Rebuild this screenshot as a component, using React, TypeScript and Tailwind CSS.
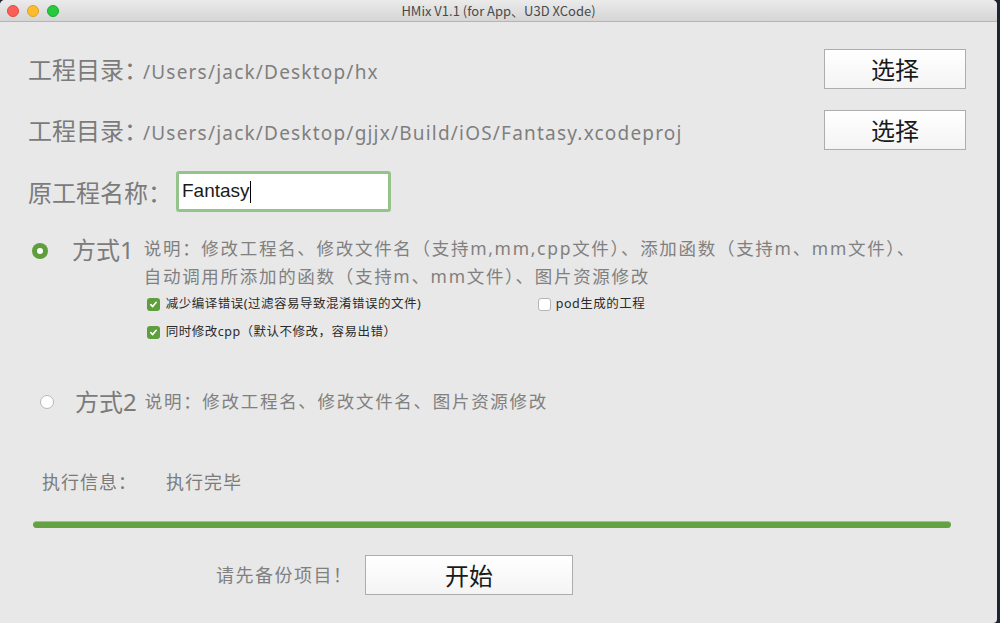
const cjk = { fontFamily: '"Noto Sans CJK SC", "Noto Sans", sans-serif' };
const mixed = { fontFamily: '"Noto Sans", "Noto Sans CJK SC", sans-serif' };

function TrafficLights() {
  return (
    <div className="absolute left-[7px] top-[5px] flex gap-[8px]">
      <span className="block w-[12px] h-[12px] rounded-full bg-[#fc5f57] border border-[#de4a41]" />
      <span className="block w-[12px] h-[12px] rounded-full bg-[#fdbc2e] border border-[#dea123]" />
      <span className="block w-[12px] h-[12px] rounded-full bg-[#28c840] border border-[#1aab29]" />
    </div>
  );
}

function MacButton({ label, className }: { label: string; className: string }) {
  return (
    <button
      className={`flex items-center justify-center bg-gradient-to-b from-white to-[#f4f4f4] border border-[#adadad] text-[24px] text-[#1a1a1a] leading-none ${className}`}
    >
      {label}
    </button>
  );
}

function Check({ checked }: { checked: boolean }) {
  if (!checked) {
    return <span className="block w-[13px] h-[13px] rounded-[3px] bg-white border border-[#b5b5b5]" />;
  }
  return (
    <span className="flex items-center justify-center w-[13px] h-[13px] rounded-[3px] bg-[#5e9e3c]">
      <svg width="9" height="9" viewBox="0 0 10 10">
        <path d="M2 5.2 L4.1 7.3 L8 2.6" stroke="white" strokeWidth="1.8" fill="none" strokeLinecap="round" strokeLinejoin="round" />
      </svg>
    </span>
  );
}

function PathRow({ path }: { path: string }) {
  return (
    <div className="flex items-center justify-between pl-[28px] pr-[31px] h-[40px]">
      <div className="flex items-baseline whitespace-nowrap text-[#7b7b7b]">
        <span className="text-[24px]">工程目录：</span>
        <span className="-ml-[5px] text-[19px] tracking-[1.2px] text-[#7f7f7f]" style={mixed}>{path}</span>
      </div>
      <MacButton label="选择" className="w-[142px] h-[40px]" />
    </div>
  );
}

export default function App() {
  return (
    <div className="w-[1000px] h-[623px] bg-[#1f2433] overflow-hidden" style={cjk}>
      <div className="w-[997px] h-[623px] bg-[#e8e8e8] rounded-t-[5px] rounded-br-[4px] overflow-hidden flex flex-col">
        {/* 标题栏 */}
        <div className="relative h-[22px] shrink-0 bg-gradient-to-b from-[#ebebeb] to-[#d5d5d5] border-b border-[#b4b4b4] flex items-center justify-center">
          <TrafficLights />
          <span className="text-[13px] text-[#4a4a4a] leading-none">HMix V1.1 (for App、U3D XCode)</span>
        </div>

        <div className="flex flex-col">
          <div className="mt-[27px] flex flex-col gap-[21px]">
            <PathRow path="/Users/jack/Desktop/hx" />
            <PathRow path="/Users/jack/Desktop/gjjx/Build/iOS/Fantasy.xcodeproj" />
          </div>

          {/* 原工程名称 */}
          <div className="flex items-center pl-[28px] mt-[21px] h-[41px]">
            <span className="text-[24px] text-[#7b7b7b] w-[148px] whitespace-nowrap">原工程名称：</span>
            <div className="w-[215px] h-[41px] border-[3px] border-[#94c48a] rounded-[3px] bg-white flex items-center pl-[3px]">
              <span className="text-[19px] text-[#1a1a1a]" style={{ fontFamily: '"Liberation Sans", Arial, sans-serif' }}>Fantasy</span>
              <span className="block w-px h-[22px] bg-black" />
            </div>
          </div>

          {/* 方式1 */}
          <div className="flex items-start pl-[32px] mt-[22px]">
            <span className="mt-[9px] flex items-center justify-center w-[16px] h-[16px] rounded-full bg-[#5e9e3c]">
              <span className="block w-[6px] h-[6px] rounded-full bg-white" />
            </span>
            <span className="ml-[24px] text-[24px] text-[#7b7b7b] leading-[32px]" style={mixed}>方式1</span>
            <div className="ml-[10px] flex flex-col">
              <p className="text-[17.5px] tracking-[1.7px] text-[#808080] leading-[28px] w-[830px]" style={mixed}>
                说明：修改工程名、修改文件名（支持m,mm,cpp文件）、添加函数（支持m、mm文件）、
                <br />
                自动调用所添加的函数（支持m、mm文件）、图片资源修改
              </p>
              <div className="flex flex-col gap-[9px] mt-[5px] ml-[3px] text-[12.5px] tracking-[0.5px] text-[#2b2b2b]" style={mixed}>
                <div className="flex items-center">
                  <label className="flex items-center gap-[6px] w-[391px]">
                    <Check checked />
                    减少编译错误(过滤容易导致混淆错误的文件)
                  </label>
                  <label className="flex items-center gap-[5px]">
                    <Check checked={false} />
                    pod生成的工程
                  </label>
                </div>
                <label className="flex items-center gap-[6px]">
                  <Check checked />
                  同时修改cpp（默认不修改，容易出错）
                </label>
              </div>
            </div>
          </div>

          {/* 方式2 */}
          <div className="flex items-center pl-[40px] mt-[42px]">
            <span className="block w-[14px] h-[14px] rounded-full bg-white border border-[#b8b8b8]" />
            <span className="ml-[21px] text-[24px] text-[#7b7b7b]" style={mixed}>方式2</span>
            <span className="ml-[8px] text-[17.5px] tracking-[1.7px] text-[#808080]">说明：修改工程名、修改文件名、图片资源修改</span>
          </div>

          {/* 执行信息 */}
          <div className="flex items-center pl-[42px] mt-[48px] text-[18px] tracking-[1px] text-[#7b7b7b]">
            <span className="w-[124px]">执行信息：</span>
            <span>执行完毕</span>
          </div>

          {/* 进度条 */}
          <div className="ml-[33px] mt-[26px] w-[918px] h-[7px] rounded-full bg-[#64a142] border-t border-[#9cc58a]" />

          {/* 开始 */}
          <div className="flex items-center pl-[216px] mt-[27px]">
            <span className="text-[18px] tracking-[1.5px] text-[#808080] w-[149px]">请先备份项目！</span>
            <MacButton label="开始" className="w-[208px] h-[40px]" />
          </div>
        </div>
      </div>
    </div>
  );
}
